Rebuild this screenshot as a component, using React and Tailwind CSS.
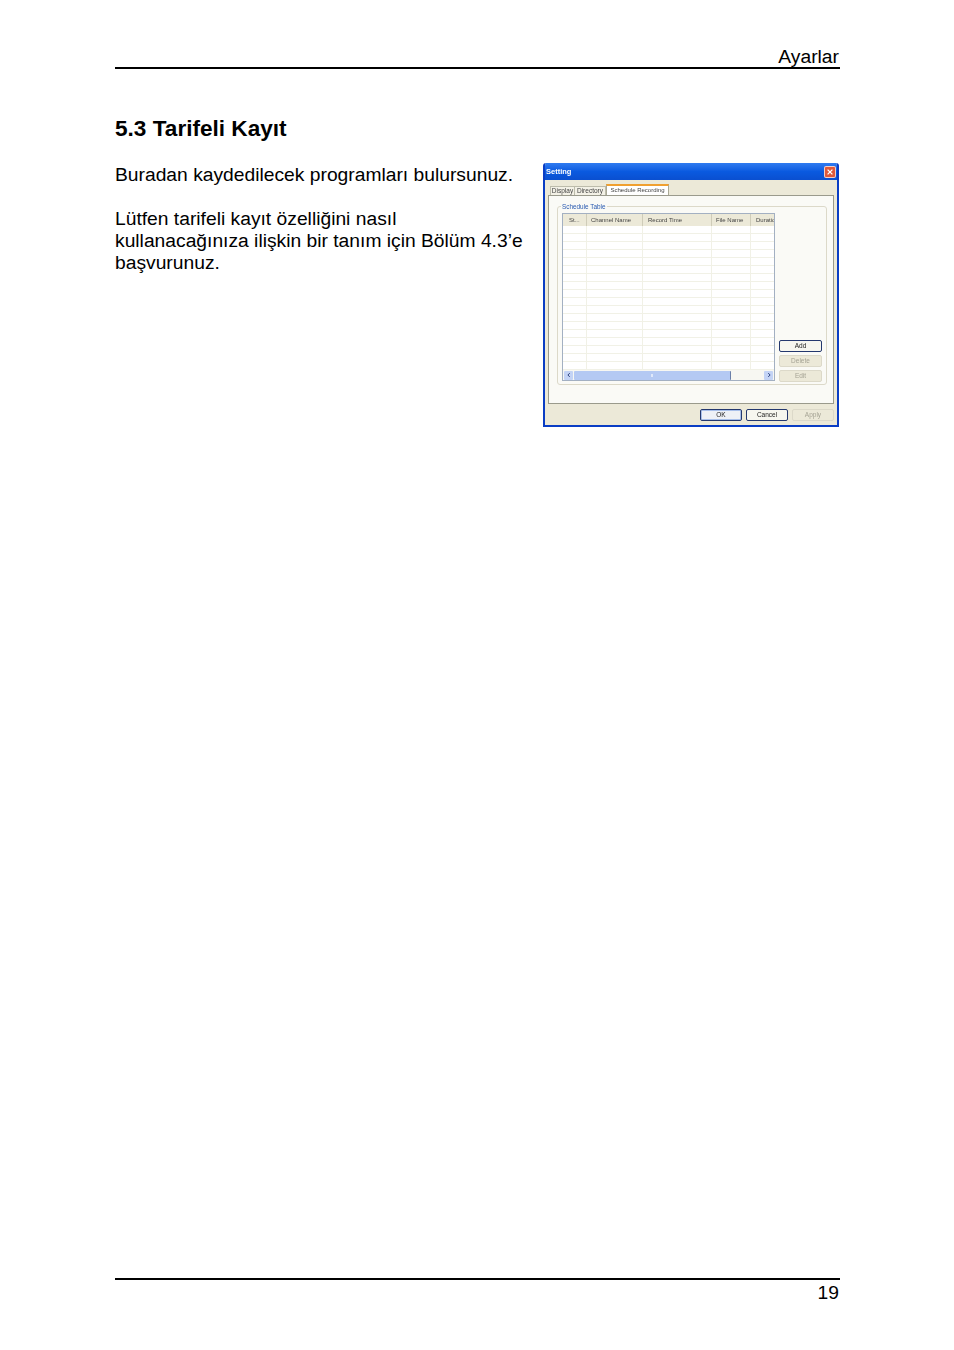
import React from 'react';

const columns = [
    { label: 'St...', width: 'w-[24px]', pad: 'pl-[6px]' },
    { label: 'Channel Name', width: 'w-[56px]', pad: 'pl-[4px]' },
    { label: 'Record Time', width: 'w-[69px]', pad: 'pl-[5px]' },
    { label: 'File Name', width: 'w-[39px]', pad: 'pl-[4px]' },
    { label: 'Duration', width: 'w-[25px]', pad: 'pl-[5px]' },
];

const rows = Array.from({ length: 18 });

const SideButton = ({ label, active }) => (
    <div className={`h-[12px] w-[43px] rounded-[2px] flex items-center justify-center text-[6.5px] leading-none border ${active ? 'border-[#24386e] bg-[#f6f6ef] text-[#222]' : 'border-[#dcd9c9] bg-[#ece9d8] text-[#a5a394]'}`}>
        {label}
    </div>
);

const SettingDialog = () => (
    <div className="w-[296px] h-[264px] flex flex-col bg-[#ece9d8] border-2 border-t-0 border-[#0a3dc4] font-['Liberation_Sans',sans-serif] rounded-t-[3px] overflow-hidden blur-[0.3px]">
        {/* title bar */}
        <div className="h-[17px] -mx-[2px] px-[3px] pt-[1px] flex items-center justify-between bg-gradient-to-b from-[#2f7bf0] via-[#0a5ae0] to-[#0a4fd0]">
            <span className="text-[7.5px] font-bold text-white leading-none">Setting</span>
            <div className="w-[12px] h-[12px] rounded-[2px] border border-white/70 bg-[#e0593a] flex items-center justify-center">
                <svg viewBox="0 0 10 10" className="w-[8px] h-[8px]"><path d="M2 2l6 6M8 2l-6 6" stroke="#fff" strokeWidth="1.6" /></svg>
            </div>
        </div>

        {/* tabs */}
        <div className="h-[16px] pl-[5px] flex items-end text-[6.5px] leading-none text-[#444]">
            <div className="h-[10px] w-[25px] flex items-center justify-center bg-[#f3f1e6] border border-b-0 border-[#bdbcab]">Display</div>
            <div className="h-[10px] w-[31px] flex items-center justify-center bg-[#f3f1e6] border border-b-0 border-l-0 border-[#bdbcab]">Directory</div>
            <div className="h-[12px] w-[63px] pb-[2px] flex items-center justify-center bg-white border-x border-t-2 border-x-[#a9a895] border-t-[#f0a030] text-[6px]">Schedule Recording</div>
        </div>

        {/* tab panel */}
        <div className="h-[209px] mx-[3px] pt-[10px] px-[8px] bg-[#fafaf6] border border-[#9a9a8c] relative -mt-[1px]">
            <div className="h-[179px] w-[270px] rounded-[3px] border border-[#dcd9c9] pt-[6px] pl-[4px] flex gap-[4px] relative">
                <span className="absolute -top-[3px] left-[3px] px-[1px] bg-[#fafaf6] text-[6.4px] leading-none text-[#2a5ab0]">Schedule Table</span>

                {/* list */}
                <div className="w-[213px] h-[168px] bg-white border border-[#a3b0c2] flex flex-col overflow-hidden">
                    <div className="h-[12px] flex bg-[#ece9d8] shrink-0 text-[6px] leading-none text-[#444]">
                        {columns.map((c) => (
                            <div key={c.label} className={`${c.width} ${c.pad} shrink-0 flex items-center overflow-hidden whitespace-nowrap border-r border-[#cfccb9] last:border-r-0`}>{c.label}</div>
                        ))}
                    </div>
                    <div className="flex-1 overflow-hidden">
                        {rows.map((_, i) => (
                            <div key={i} className="h-[8px] flex border-b border-[#f1f1e6]">
                                {columns.map((c) => (
                                    <div key={c.label} className={`${c.width} shrink-0 border-r border-[#f1f1e6] last:border-r-0`} />
                                ))}
                            </div>
                        ))}
                    </div>
                    <div className="h-[10px] shrink-0 px-[1px] flex items-center bg-[#f7f7f2]">
                        <div className="w-[9px] h-[9px] rounded-[1px] bg-[#c3d3f5] flex items-center justify-center">
                            <svg viewBox="0 0 8 8" className="w-[6px] h-[6px]"><path d="M5 1.5L2.5 4 5 6.5" fill="none" stroke="#2a3f78" strokeWidth="1.3" /></svg>
                        </div>
                        <div className="w-[157px] h-[9px] ml-[1px] rounded-[1px] bg-[#b4c9f3] border-r border-[#6a7fa8] flex items-center justify-center">
                            <div className="w-[2px] h-[3px] bg-[#dfe8fa]" />
                        </div>
                        <div className="flex-1" />
                        <div className="w-[9px] h-[9px] rounded-[1px] bg-[#c3d3f5] flex items-center justify-center">
                            <svg viewBox="0 0 8 8" className="w-[6px] h-[6px]"><path d="M3 1.5L5.5 4 3 6.5" fill="none" stroke="#2a3f78" strokeWidth="1.3" /></svg>
                        </div>
                    </div>
                </div>

                {/* side buttons */}
                <div className="flex flex-col justify-end gap-[3px] h-[169px]">
                    <SideButton label="Add" active />
                    <SideButton label="Delete" />
                    <SideButton label="Edit" />
                </div>
            </div>
        </div>

        {/* dialog buttons */}
        <div className="flex-1 flex items-center justify-end gap-[4px] pr-[3px] pt-[1px] text-[6.5px] leading-none">
            <div className="w-[42px] h-[12px] rounded-[2px] border border-[#24386e] bg-[#eef1f6] shadow-[inset_0_0_0_1px_#a9c0ea] flex items-center justify-center text-[#222]">OK</div>
            <div className="w-[42px] h-[12px] rounded-[2px] border border-[#24386e] bg-[#f6f6ef] flex items-center justify-center text-[#222]">Cancel</div>
            <div className="w-[42px] h-[12px] rounded-[2px] border border-[#dcd9c9] flex items-center justify-center text-[#a5a394]">Apply</div>
        </div>
    </div>
);

export default function App() {
    return (
        <div className="w-[954px] h-[1350px] bg-white text-black flex flex-col pl-[115px] pr-[114px] font-['Liberation_Sans',sans-serif]">
            <header className="h-[69px] flex items-end justify-end border-b-2 border-black">
                <span className="text-[19.25px] leading-[20px] pr-[1px]">Ayarlar</span>
            </header>

            <h1 className="mt-[47px] text-[22.6px] leading-[26px] font-bold">5.3 Tarifeli Kayıt</h1>

            <div className="mt-[21px] flex items-start justify-between">
                <div className="w-[420px] mt-[1px] text-[19.25px] leading-[22px]">
                    <p>Buradan kaydedilecek programları bulursunuz.</p>
                    <p className="mt-[22px]">Lütfen tarifeli kayıt özelliğini nasıl<br />kullanacağınıza ilişkin bir tanım için Bölüm 4.3’e<br />başvurunuz.</p>
                </div>
                <div className="mr-[1px]">
                    <SettingDialog />
                </div>
            </div>

            <div className="flex-1" />

            <footer className="h-[72px] border-t-2 border-black flex justify-end items-start pt-[2px]">
                <span className="text-[19.25px] leading-[22px] pr-[1px]">19</span>
            </footer>
        </div>
    );
}
